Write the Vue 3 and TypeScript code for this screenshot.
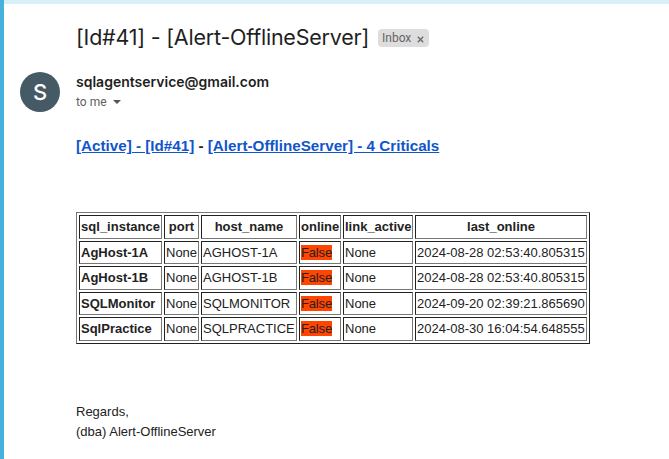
<script setup lang="ts">
interface ServerRow {
  instance: string
  port: string
  host: string
  online: string
  link: string
  last: string
}

const columns: string[] = ['sql_instance', 'port', 'host_name', 'online', 'link_active', 'last_online']

const rows: ServerRow[] = [
  { instance: 'AgHost-1A', port: 'None', host: 'AGHOST-1A', online: 'False', link: 'None', last: '2024-08-28 02:53:40.805315' },
  { instance: 'AgHost-1B', port: 'None', host: 'AGHOST-1B', online: 'False', link: 'None', last: '2024-08-28 02:53:40.805315' },
  { instance: 'SQLMonitor', port: 'None', host: 'SQLMONITOR', online: 'False', link: 'None', last: '2024-09-20 02:39:21.865690' },
  { instance: 'SqlPractice', port: 'None', host: 'SQLPRACTICE', online: 'False', link: 'None', last: '2024-08-30 16:04:54.648555' },
]
</script>

<template>
  <main class="mail">
    <header class="subject">
      <h1>[Id#41] - [Alert-OfflineServer]</h1>
      <span class="label">
        <span>Inbox</span>
        <svg width="7" height="7" viewBox="0 0 7 7"><path d="M.8 .8l5.4 5.4M6.2 .8L.8 6.2" /></svg>
      </span>
    </header>
    <section class="sender">
      <div class="avatar"><span>S</span></div>
      <div class="who">
        <div class="address">sqlagentservice@gmail.com</div>
        <div class="to">
          <span>to me</span>
          <svg width="8" height="4" viewBox="0 0 8 4"><path d="M0 0h8L4 4z" /></svg>
        </div>
      </div>
    </section>
    <article class="body">
      <h2><a>[Active] - [Id#41]</a> - <a>[Alert-OfflineServer] - 4 Criticals</a></h2>
      <table>
        <colgroup>
          <col class="c1" /><col class="c2" /><col class="c3" /><col class="c4" /><col class="c5" /><col class="c6" />
        </colgroup>
        <thead>
          <tr><th v-for="c in columns" :key="c">{{ c }}</th></tr>
        </thead>
        <tbody>
          <tr v-for="r in rows" :key="r.instance">
            <td><b>{{ r.instance }}</b></td>
            <td>{{ r.port }}</td>
            <td>{{ r.host }}</td>
            <td><span class="bad">{{ r.online }}</span></td>
            <td>{{ r.link }}</td>
            <td>{{ r.last }}</td>
          </tr>
        </tbody>
      </table>
      <p>Regards,<br />(dba) Alert-OfflineServer</p>
    </article>
  </main>
</template>

<style>
body {
  margin: 0;
  background: #fff;
  overflow: hidden;
}
</style>

<style scoped>
.mail {
  box-sizing: border-box;
  width: 669px;
  height: 459px;
  border-left: 4px solid #46b1da;
  background: linear-gradient(#d9eff7 4px, #fff 4px);
  padding: 22px 0 0 16px;
  overflow: hidden;
  color: #222;
  font-family: "Liberation Sans", Arial, sans-serif;
}
.subject {
  display: flex;
  align-items: center;
  height: 32px;
  padding-left: 56px;
}
h1 {
  margin: 0;
  padding-bottom: 2px;
  width: 302px;
  font: 400 21.5px/30px Inter, sans-serif;
  letter-spacing: -0.22px;
  color: #1f1f1f;
  white-space: nowrap;
}
.label {
  box-sizing: border-box;
  display: flex;
  align-items: center;
  justify-content: space-between;
  width: 51px;
  height: 18px;
  padding: 0 5px 0 4px;
  border-radius: 4px;
  background: #ddd;
  color: #666;
  font: 12px/18px Roboto, sans-serif;
}
.label svg {
  margin-top: 2px;
  fill: none;
  stroke: #666;
  stroke-width: 1.3;
}
.sender {
  display: flex;
  gap: 16px;
  margin-top: 18px;
}
.avatar {
  display: flex;
  align-items: center;
  justify-content: center;
  width: 40px;
  height: 40px;
  border-radius: 50%;
  background: #455a64;
  color: #fff;
  font: 500 22px/40px Inter, sans-serif;
}
.address {
  height: 20px;
  font: 600 14px/20px Inter, sans-serif;
  color: #1f1f1f;
}
.to {
  display: flex;
  align-items: center;
  gap: 6px;
  height: 20px;
  font: 12px/20px Roboto, sans-serif;
  color: #5e5e5e;
}
.to svg {
  fill: #555;
}
.body {
  padding-left: 56px;
  font-size: 13px;
  line-height: 19.5px;
}
h2 {
  margin: 24px 0 0;
  font-size: 15.21px;
  line-height: 20px;
}
a {
  color: #15c;
  text-decoration: underline;
}
table {
  table-layout: fixed;
  width: 514px;
  margin-top: 56px;
  border: 1px solid;
  border-color: #777 #222 #222 #777;
  border-spacing: 2px;
  white-space: nowrap;
}
.c1 { width: 83px; }
.c2 { width: 35px; }
.c3 { width: 96px; }
.c4 { width: 42px; }
.c5 { width: 70px; }
.c6 { width: 172px; }
th,
td {
  padding: 1px;
  border: 1px solid;
  border-color: #222 #777 #777 #222;
}
th {
  text-align: center;
}
.bad {
  background: #ff4500;
  letter-spacing: -0.15px;
}
p {
  margin: 58px 0 0;
  line-height: 20px;
}
</style>
